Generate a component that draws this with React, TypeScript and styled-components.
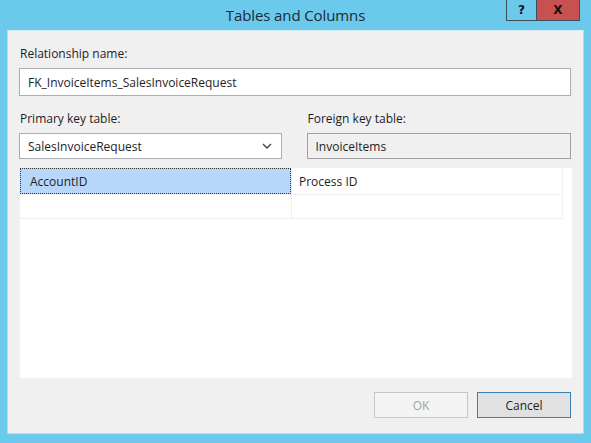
import React from 'react';
import styled, { createGlobalStyle } from 'styled-components';

const GlobalStyle = createGlobalStyle`
  html, body {
    margin: 0;
    padding: 0;
  }
  body {
    font-family: 'Open Sans', 'Noto Sans', sans-serif;
    font-size: 12px;
    color: #1e1e1e;
  }
`;

const Window = styled.div`
  width: 591px;
  height: 443px;
  background: #6bc9eb;
  display: flex;
  flex-direction: column;
  box-sizing: border-box;
`;

const TitleBar = styled.div`
  height: 30px;
  display: grid;
  grid-template-columns: 1fr auto 1fr;
  align-items: start;
`;

const Title = styled.div`
  grid-column: 2;
  padding-top: 5px;
  font-size: 15px;
  color: #1d2b38;
  letter-spacing: -0.1px;
`;

const Controls = styled.div`
  grid-column: 3;
  justify-self: end;
  display: flex;
  margin-right: 11px;
`;

const CaptionButton = styled.div<{ $close?: boolean }>`
  box-sizing: border-box;
  height: 21px;
  width: ${(p) => (p.$close ? '43px' : '31px')};
  background: ${(p) => (p.$close ? '#c75050' : '#6bc9eb')};
  border: 1px solid #3d4e5c;
  border-top: none;
  border-left: ${(p) => (p.$close ? 'none' : '1px solid #3d4e5c')};
  display: flex;
  align-items: center;
  justify-content: center;
  font-family: 'DejaVu Sans', sans-serif;
  font-weight: bold;
  font-size: 12px;
  color: #111;
`;

const Client = styled.div`
  flex: 1;
  margin: 0 7px 9px 7px;
  background: #f0f0f0;
  border: 1px solid #b6dcea;
  border-top-color: #d8eef6;
  display: flex;
  flex-direction: column;
  padding: 15px 12px 15px 11px;
`;

const Label = styled.div`
  height: 16px;
  line-height: 16px;
  padding-left: 1px;
  margin-bottom: 6px;
`;

const TextBox = styled.div<{ $readOnly?: boolean; $h: number }>`
  height: ${(p) => p.$h}px;
  box-sizing: border-box;
  border: 1px solid ${(p) => (p.$readOnly ? '#a0a0a0' : '#abadb3')};
  background: ${(p) => (p.$readOnly ? '#f0f0f0' : '#ffffff')};
  display: flex;
  align-items: center;
  padding: 0 8px;
  white-space: nowrap;
`;

const KeyRow = styled.div`
  display: flex;
  gap: 25px;
  margin-top: 15px;
`;

const Field = styled.div<{ $w: number }>`
  width: ${(p) => p.$w}px;
  display: flex;
  flex-direction: column;
`;

const Chevron = styled.svg`
  margin-left: auto;
  margin-right: 1px;
`;

const Grid = styled.div`
  margin-top: 9px;
  margin-left: 1px;
  height: 210px;
  width: 552px;
  background: #ffffff;
  display: flex;
`;

const Columns = styled.div`
  width: 542px;
  display: grid;
  grid-template-columns: 271px 270px;
  grid-auto-rows: 26px 23px;
  column-gap: 1px;
  row-gap: 1px;
  align-content: start;
  background: #f0f0f0;
  border-right: 1px solid #f0f0f0;
  height: 51px;
`;

const Cell = styled.div<{ $selected?: boolean }>`
  background: ${(p) => (p.$selected ? '#b7d8fb' : '#ffffff')};
  outline: ${(p) => (p.$selected ? '1px dotted #333' : 'none')};
  outline-offset: -1px;
  display: flex;
  align-items: center;
  padding-left: ${(p) => (p.$selected ? '10px' : '7px')};
`;

const Footer = styled.div`
  margin-top: auto;
  display: flex;
  justify-content: flex-end;
  gap: 9px;
`;

const Button = styled.button<{ $primary?: boolean }>`
  width: 94px;
  height: 26px;
  font-family: inherit;
  font-size: 12px;
  background: ${(p) => (p.$primary ? '#e1e1e1' : '#f4f4f4')};
  border: 1px solid ${(p) => (p.$primary ? '#3c7fb1' : '#c6c6c6')};
  color: ${(p) => (p.$primary ? '#1e1e1e' : '#a3a3a3')};
  padding: 0;
`;

export default function App() {
  return (
    <>
      <GlobalStyle />
      <Window>
        <TitleBar>
          <Title>Tables and Columns</Title>
          <Controls>
            <CaptionButton>?</CaptionButton>
            <CaptionButton $close>X</CaptionButton>
          </Controls>
        </TitleBar>
        <Client>
          <Label>Relationship name:</Label>
          <TextBox $h={28}>FK_InvoiceItems_SalesInvoiceRequest</TextBox>
          <KeyRow>
            <Field $w={263}>
              <Label>Primary key table:</Label>
              <TextBox $h={26}>
                SalesInvoiceRequest
                <Chevron width="10" height="6" viewBox="0 0 10 6">
                  <polyline points="1,1 5,5 9,1" fill="none" stroke="#444" strokeWidth="1.4" />
                </Chevron>
              </TextBox>
            </Field>
            <Field $w={265}>
              <Label>Foreign key table:</Label>
              <TextBox $h={26} $readOnly>InvoiceItems</TextBox>
            </Field>
          </KeyRow>
          <Grid>
            <Columns>
              <Cell $selected>AccountID</Cell>
              <Cell>Process ID</Cell>
              <Cell />
              <Cell />
            </Columns>
          </Grid>
          <Footer>
            <Button disabled>OK</Button>
            <Button $primary>Cancel</Button>
          </Footer>
        </Client>
      </Window>
    </>
  );
}
